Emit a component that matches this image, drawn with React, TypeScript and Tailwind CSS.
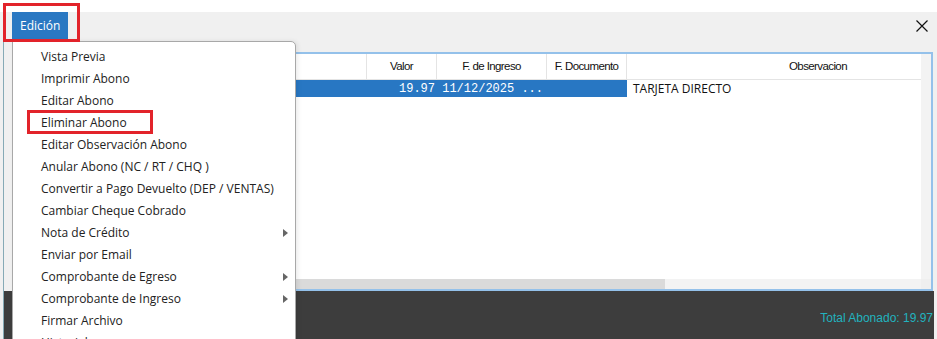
import React from 'react';

const menuItems: { label: string; sub?: boolean }[] = [
  { label: 'Vista Previa' },
  { label: 'Imprimir Abono' },
  { label: 'Editar Abono' },
  { label: 'Eliminar Abono' },
  { label: 'Editar Observación Abono' },
  { label: 'Anular Abono (NC / RT / CHQ )' },
  { label: 'Convertir a Pago Devuelto (DEP / VENTAS)' },
  { label: 'Cambiar Cheque Cobrado' },
  { label: 'Nota de Crédito', sub: true },
  { label: 'Enviar por Email' },
  { label: 'Comprobante de Egreso', sub: true },
  { label: 'Comprobante de Ingreso', sub: true },
  { label: 'Firmar Archivo' },
  { label: 'Historial' },
];

const headerFont = "font-['Liberation_Sans',Arial,sans-serif] text-[11.5px] tracking-[-0.6px] text-[#111]";

const App = () => {
  return (
    <div className="relative w-[937px] h-[339px] overflow-hidden bg-white font-['Open_Sans',sans-serif]">
      <div className="h-[12px]" />
      <div className="flex flex-col h-[327px] bg-[#f0f0f0]">
        {/* toolbar */}
        <div className="flex items-center justify-between h-[28px] pl-[12px] pr-[9px]">
          <button className="h-[28px] px-[8px] bg-[#2a78c2] text-white text-[12px]">Edición</button>
          <svg width="12" height="12" viewBox="0 0 12 12" className="mb-[1px]">
            <path d="M0.5 0.5 L11.5 11.5 M11.5 0.5 L0.5 11.5" stroke="#111" strokeWidth="1.2" />
          </svg>
        </div>

        <div className="flex flex-col flex-1 ml-[3px] border-l border-[#86aab6]">
          <div className="h-[12px]" />

          {/* grid frame */}
          <div className="flex flex-col h-[239px] ml-[10px] mr-[4px] border-2 border-[#94c1ea]">
            <div className="flex h-[225px]">
              <div className="flex-1 bg-white overflow-hidden">
                <div className={`flex h-[26px] border-b border-[#e4e4e4] ${headerFont}`}>
                  <div className="w-[351px] border-r border-[#e4e4e4]" />
                  <div className="w-[70px] flex items-center justify-center border-r border-[#e4e4e4]">Valor</div>
                  <div className="w-[110px] flex items-center justify-center border-r border-[#e4e4e4]">F. de Ingreso</div>
                  <div className="w-[80px] flex items-center justify-center border-r border-[#e4e4e4]">F. Documento</div>
                  <div className="flex-1 flex items-center pl-[162px]">Observacion</div>
                </div>
                <div className="flex h-[17px]">
                  <div className="w-[611px] bg-[#2877c3] flex items-center pl-[383px] text-white font-['Liberation_Mono',monospace] text-[12px] whitespace-pre">
                    19.97 11/12/2025 ...
                  </div>
                  <div className="flex-1 flex items-center pl-[6px] text-[12px] text-[#111]">TARJETA DIRECTO</div>
                </div>
              </div>
              <div className="w-[10px] bg-[#f3f3f3]" />
            </div>
            <div className="flex h-[10px]">
              <div className="w-[649px] bg-[#dadada]" />
              <div className="flex-1 bg-[#f3f3f3]" />
              <div className="w-[10px] bg-[#efefef]" />
            </div>
          </div>

          {/* footer */}
          <div className="flex-1 bg-[#3d3d3d] mr-[3px] flex justify-end pt-[19px] pr-[1px]">
            <span className="font-['Liberation_Sans',Arial,sans-serif] text-[12px] leading-[16px] text-[#22b3bf]">
              Total Abonado: 19.97
            </span>
          </div>
        </div>
      </div>

      {/* context menu */}
      <div className="absolute left-[12px] top-[41px] w-[284px] h-[320px] bg-white border border-[#a8a8a8] rounded-tr-[5px] shadow-[2px_0_4px_rgba(0,0,0,0.08)] pt-[4px]">
        {menuItems.map((item) => (
          <div key={item.label} className="relative h-[22px] flex items-center pl-[28px] text-[12px] text-[#222]">
            {item.label}
            {item.sub && (
              <svg width="5" height="8" viewBox="0 0 5 8" className="absolute right-[7px] top-[7px]">
                <path d="M0 0 L5 4 L0 8 Z" fill="#666" />
              </svg>
            )}
          </div>
        ))}
      </div>

      {/* highlight boxes */}
      <div className="absolute left-[3px] top-[3px] w-[77px] h-[39px] border-[3px] border-[#e2232a]" />
      <div className="absolute left-[27px] top-[110px] w-[126px] h-[24px] border-[3px] border-[#e2232a]" />
    </div>
  );
};

export default App;
